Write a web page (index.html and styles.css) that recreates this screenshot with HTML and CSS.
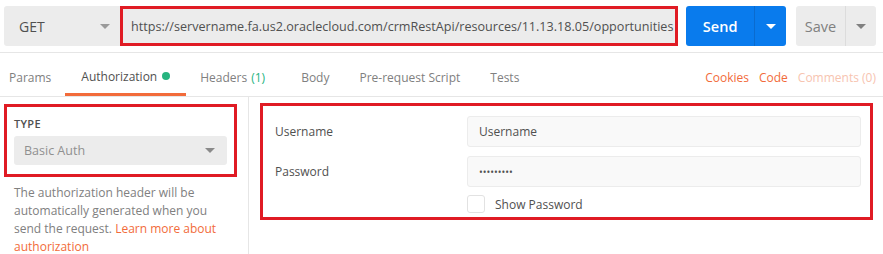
FILE: index.html
```html
<!DOCTYPE html>
<html lang="en">
<head>
    <meta charset="UTF-8">
    <title>Request</title>
    <link rel="stylesheet" href="styles.css">
</head>
<body>
<div class="request-bar">
    <div class="method">GET <span class="caret"></span></div>
    <div class="url mark">https://servername.fa.us2.oraclecloud.com/crmRestApi/resources/11.13.18.05/opportunities</div>
    <div class="btn send"><span class="btn-label">Send</span><span class="btn-drop"><span class="caret"></span></span></div>
    <div class="btn save"><span class="btn-label">Save</span><span class="btn-drop"><span class="caret"></span></span></div>
</div>
<div class="tabs">
    <div class="tab">Params</div>
    <div class="tab active">Authorization <span class="dot"></span></div>
    <div class="tab headers">Headers <span class="count">(1)</span></div>
    <div class="tab">Body</div>
    <div class="tab">Pre-request Script</div>
    <div class="tab">Tests</div>
    <div class="tab-links">
        <span class="link">Cookies</span>
        <span class="link">Code</span>
        <span class="link faded">Comments (0)</span>
    </div>
</div>
<div class="auth">
    <div class="auth-side">
        <div class="type-box mark">
            <div class="type-label">TYPE</div>
            <div class="type-select">Basic Auth <span class="caret"></span></div>
        </div>
        <p class="help">The authorization header will be automatically generated when you send the request. <span class="link">Learn more about authorization</span></p>
    </div>
    <div class="auth-main">
        <div class="fields mark">
            <div class="field-row">
                <label>Username</label>
                <div class="input">Username</div>
            </div>
            <div class="field-row">
                <label>Password</label>
                <div class="input dots">•••••••••</div>
            </div>
            <div class="field-row check-row">
                <label></label>
                <div class="check"><span class="box"></span>Show Password</div>
            </div>
        </div>
    </div>
</div>
</body>
</html>
```

FILE: styles.css
```css
body {
    margin: 0;
    font-family: 'Open Sans', sans-serif;
    font-size: 12px;
    color: #505050;
    background-color: #fff;
}
.caret {
    display: inline-block;
    width: 0;
    height: 0;
    border-left: 5px solid transparent;
    border-right: 5px solid transparent;
    border-top: 5px solid #808080;
}
.mark {
    border: 3px solid #e01b24;
}
.request-bar {
    display: flex;
    align-items: center;
    height: 53px;
    padding: 0 4px;
    box-sizing: border-box;
    border-bottom: 1px solid #e6e6e6;
}
.method {
    width: 116px;
    height: 40px;
    box-sizing: border-box;
    background-color: #ececec;
    border-radius: 3px 0 0 3px;
    display: flex;
    align-items: center;
    justify-content: space-between;
    padding: 0 10px 0 15px;
    font-size: 14px;
    color: #505050;
}
.method .caret {
    border-top-color: #9a9a9a;
}
.url {
    width: 558px;
    height: 40px;
    box-sizing: border-box;
    background-color: #ececec;
    display: flex;
    align-items: center;
    padding-left: 8px;
    font-size: 12.6px;
    color: #505050;
    white-space: nowrap;
}
.btn {
    display: flex;
    height: 40px;
    border-radius: 3px;
    overflow: hidden;
}
.btn-label {
    display: flex;
    align-items: center;
    justify-content: center;
    font-size: 14.5px;
    font-weight: 600;
}
.btn-drop {
    display: flex;
    align-items: center;
    justify-content: center;
}
.send {
    margin-left: 8px;
    width: 100px;
    background-color: #097bed;
    color: #fff;
}
.send .btn-label {
    width: 69px;
}
.send .btn-drop {
    width: 31px;
    border-left: 1px solid #0a6bcf;
}
.send .caret {
    border-top-color: #fff;
}
.save {
    margin-left: 10px;
    width: 80px;
    background-color: #ececec;
    color: #808080;
}
.save .btn-label {
    width: 49px;
    font-weight: 400;
}
.save .btn-drop {
    width: 30px;
    border-left: 1px solid #dcdcdc;
}
.tabs {
    display: flex;
    align-items: center;
    height: 43px;
    padding-left: 9px;
    padding-right: 7px;
    border-bottom: 1px solid #e6e6e6;
    font-size: 12px;
}
.tab {
    height: 43px;
    display: flex;
    align-items: center;
    color: #808080;
    margin-right: 30px;
    box-sizing: border-box;
    padding-top: 6px;
}
.tab.active {
    color: #505050;
    border-bottom: 3px solid #f26b3a;
    padding: 6px 16px 0 16px;
    margin-left: -16px;
    margin-right: 14px;
}
.tab.headers {
    margin-right: 36px;
}
.dot {
    display: inline-block;
    width: 8px;
    height: 8px;
    border-radius: 50%;
    background-color: #26b47f;
    margin-left: 5px;
}
.count {
    color: #26b47f;
    margin-left: 4px;
}
.tab-links {
    margin-left: auto;
    display: flex;
    gap: 10px;
    padding-top: 6px;
}
.link {
    color: #f26b3a;
}
.link.faded {
    color: #f7c4b0;
}
.auth {
    display: flex;
}
.auth-side {
    width: 249px;
    box-sizing: border-box;
    border-right: 1px solid #e6e6e6;
    padding: 7px 12px 0 4px;
}
.type-box {
    width: 233px;
    height: 73px;
    box-sizing: border-box;
    padding: 9px 7px 0 7px;
}
.type-label {
    font-size: 11px;
    font-weight: 600;
    letter-spacing: 0.3px;
    color: #505050;
    height: 20px;
}
.type-select {
    height: 29px;
    background-color: #ececec;
    border-radius: 3px;
    display: flex;
    align-items: center;
    justify-content: space-between;
    padding: 0 12px 0 10px;
    font-size: 12.5px;
    color: #909090;
}
.type-select .caret {
    border-top-color: #8a8a8a;
}
.help {
    width: 212px;
    margin: 7px 0 0 10px;
    font-size: 12px;
    line-height: 18px;
    color: #808080;
}
.auth-main {
    flex: 1;
    padding: 6px 10px 0 11px;
}
.fields {
    width: 613px;
    height: 117px;
    box-sizing: border-box;
    padding: 10px 9px 0 12px;
}
.field-row {
    display: flex;
    align-items: center;
    margin-bottom: 9px;
}
.field-row label {
    width: 192px;
    font-size: 12px;
    color: #505050;
}
.input {
    flex: 1;
    height: 31px;
    box-sizing: border-box;
    background-color: #f9f9f9;
    border: 1px solid #ececec;
    border-radius: 3px;
    display: flex;
    align-items: center;
    padding-left: 11px;
    font-size: 12px;
    color: #505050;
}
.input.dots {
    font-size: 10px;
    letter-spacing: 0;
}
.check-row {
    margin-top: -1px;
}
.check {
    display: flex;
    align-items: center;
    font-size: 12px;
    color: #505050;
}
.box {
    width: 16px;
    height: 16px;
    border: 1px solid #e2e2e2;
    border-radius: 3px;
    background-color: #fff;
    margin-right: 10px;
}
```
